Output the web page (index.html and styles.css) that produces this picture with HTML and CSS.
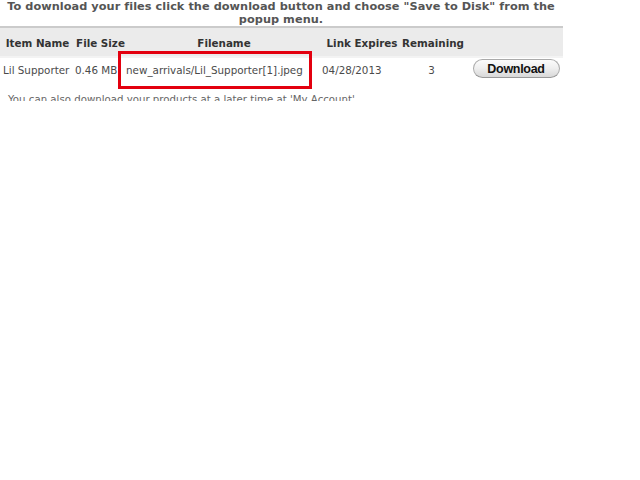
FILE: index.html
```html
<!DOCTYPE html>
<html>
<head>
<meta charset="utf-8">
<link rel="stylesheet" href="styles.css">
</head>
<body>
<div class="page">
  <p class="intro">To download your files click the download button and choose "Save to Disk" from the popup menu.</p>
  <table class="files">
    <colgroup>
      <col class="w-name">
      <col class="w-size">
      <col class="w-file">
      <col class="w-exp">
      <col class="w-rem">
      <col class="w-btn">
    </colgroup>
    <thead>
      <tr>
        <th>Item Name</th>
        <th>File Size</th>
        <th>Filename</th>
        <th>Link Expires</th>
        <th>Remaining</th>
        <th></th>
      </tr>
    </thead>
    <tbody>
      <tr>
        <td class="c-name">Lil Supporter</td>
        <td>0.46 MB</td>
        <td class="c-file"><span class="fname">new_arrivals/Lil_Supporter[1].jpeg<span class="highlight"></span></span></td>
        <td>04/28/2013</td>
        <td class="c-rem">3</td>
        <td class="c-btn"><button class="dl">Download</button></td>
      </tr>
    </tbody>
  </table>
  <div class="note-clip">
    <p class="note">You can also download your products at a later time at 'My Account'</p>
  </div>
</div>
</body>
</html>
```

FILE: styles.css
```css
html, body {
  margin: 0;
  padding: 0;
  background: #fff;
}
.page {
  width: 563px;
  font-family: "DejaVu Sans", Verdana, sans-serif;
  color: #555;
}
.intro {
  margin: 0 0 0 -4px;
  width: 570px;
  height: 26px;
  font-size: 11.3px;
  line-height: 13px;
  font-weight: bold;
  text-align: center;
  color: #555;
  letter-spacing: 0.05px;
}
.files {
  width: 563px;
  table-layout: fixed;
  border-collapse: collapse;
  font-size: 10.35px;
}
.w-name { width: 75px; }
.w-size { width: 51px; }
.w-file { width: 196px; }
.w-exp { width: 80px; }
.w-rem { width: 59px; }
.w-btn { width: 102px; }
.files thead tr {
  background: #ebebeb;
  border-top: 2px solid #cbcbcb;
  border-bottom: 2px solid #f3f3f3;
}
.files th {
  height: 27px;
  padding: 1px 0 0;
  font-weight: bold;
  color: #333;
  text-align: center;
  white-space: nowrap;
}
.files td {
  height: 23px;
  padding: 0;
  color: #4a4a4a;
  text-align: left;
  white-space: nowrap;
}
.files td.c-name { padding-left: 3px; }
.files td.c-rem { text-align: center; }
.files td.c-btn { text-align: center; padding-left: 8px; }
.fname {
  position: relative;
  display: inline-block;
  line-height: 14px;
}
.highlight {
  position: absolute;
  left: -8px;
  right: -9px;
  top: -12px;
  bottom: -12px;
  border: 3px solid #e3000f;
}
.dl {
  font-family: "Liberation Sans", Arial, sans-serif;
  font-weight: bold;
  font-size: 12.5px;
  color: #111;
  width: 87px;
  height: 19px;
  padding: 0;
  border: 1px solid #aaa;
  border-bottom-color: #999;
  border-radius: 10px;
  background: linear-gradient(#fcfcfc, #eeeeee 50%, #d8d8d8);
  letter-spacing: -0.3px;
  position: relative;
  top: -1px;
}
.note-clip {
  height: 20px;
  overflow: hidden;
}
.note {
  margin: 0;
  padding-top: 12px;
  padding-left: 8px;
  font-size: 10.2px;
  line-height: 14px;
  color: #666;
}
```
